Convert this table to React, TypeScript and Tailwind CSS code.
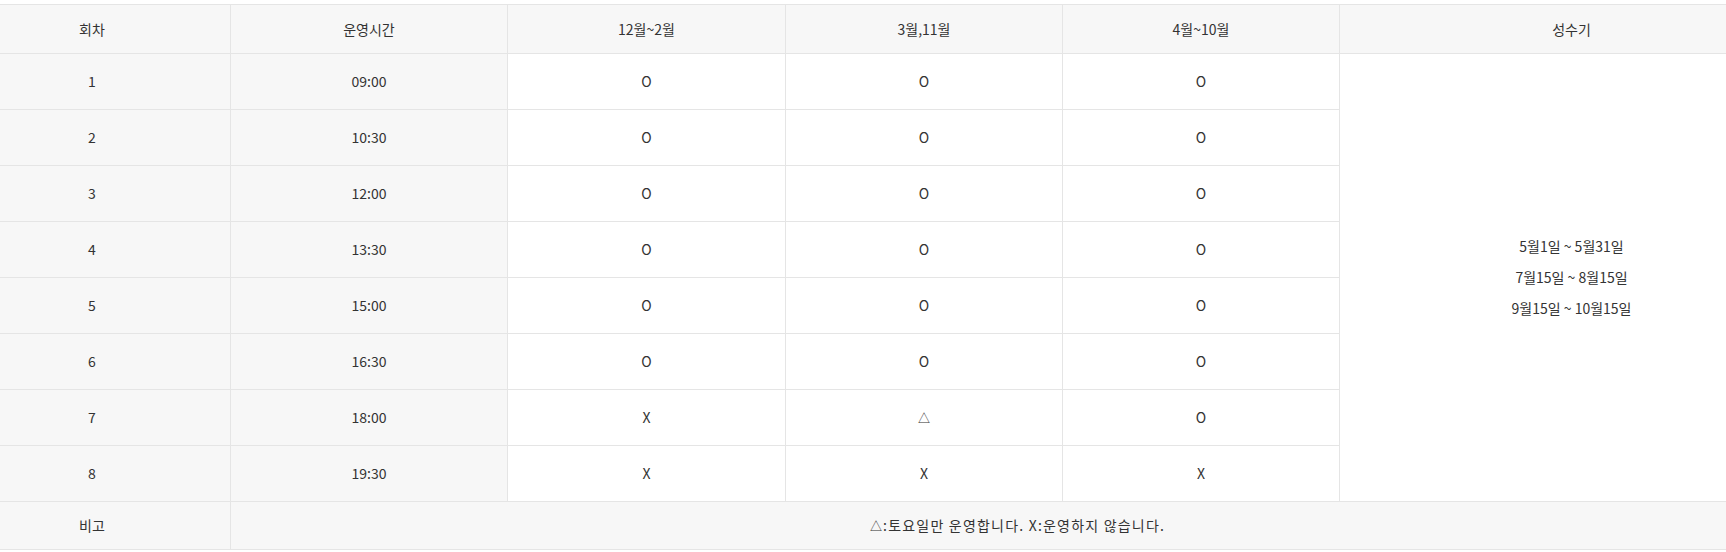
import React from "react";

const rows: { n: string; t: string; a: string; b: string; c: string }[] = [
  { n: "1", t: "09:00", a: "O", b: "O", c: "O" },
  { n: "2", t: "10:30", a: "O", b: "O", c: "O" },
  { n: "3", t: "12:00", a: "O", b: "O", c: "O" },
  { n: "4", t: "13:30", a: "O", b: "O", c: "O" },
  { n: "5", t: "15:00", a: "O", b: "O", c: "O" },
  { n: "6", t: "16:30", a: "O", b: "O", c: "O" },
  { n: "7", t: "18:00", a: "X", b: "△", c: "O" },
  { n: "8", t: "19:30", a: "X", b: "X", c: "X" },
];

function Mark({ v }: { v: string }) {
  if (v === "△") return <span className="text-[12px]">△</span>;
  return <>{v}</>;
}

export default function App() {
  return (
    <div
      className="w-[1726px] bg-white pt-[4px] text-[14px] text-[#333]"
      style={{ fontFamily: '"Noto Sans CJK KR", "Noto Sans", sans-serif' }}
    >
      <table className="w-[1726px] table-fixed border-separate border-spacing-0">
        <colgroup>
          <col className="w-[231px]" />
          <col className="w-[277px]" />
          <col className="w-[278px]" />
          <col className="w-[277px]" />
          <col className="w-[277px]" />
          <col className="w-[386px]" />
        </colgroup>
        <thead>
          <tr>
            <th className="h-[50px] border-y border-r border-[#e5e5e5] bg-[#f7f7f7] pr-[46px] text-center font-normal">회차</th>
            <th className="h-[50px] border-y border-r border-[#e5e5e5] bg-[#f7f7f7] text-center font-normal">운영시간</th>
            <th className="h-[50px] border-y border-r border-[#e5e5e5] bg-[#f7f7f7] text-center font-normal">12월~2월</th>
            <th className="h-[50px] border-y border-r border-[#e5e5e5] bg-[#f7f7f7] text-center font-normal">3월,11월</th>
            <th className="h-[50px] border-y border-r border-[#e5e5e5] bg-[#f7f7f7] text-center font-normal">4월~10월</th>
            <th className="h-[50px] border-y border-[#e5e5e5] bg-[#f7f7f7] pl-[77px] text-center font-normal">성수기</th>
          </tr>
        </thead>
        <tbody>
          {rows.map((r, i) => (
            <tr key={r.n}>
              <td className="h-[56px] border-b border-r border-[#e5e5e5] bg-[#f7f7f7] pr-[46px] text-center">{r.n}</td>
              <td className="h-[56px] border-b border-r border-[#e5e5e5] bg-[#f7f7f7] text-center">{r.t}</td>
              <td className="h-[56px] border-b border-r border-[#e5e5e5] bg-white text-center"><Mark v={r.a} /></td>
              <td className="h-[56px] border-b border-r border-[#e5e5e5] bg-white text-center"><Mark v={r.b} /></td>
              <td className="h-[56px] border-b border-r border-[#e5e5e5] bg-white text-center"><Mark v={r.c} /></td>
              {i === 0 && (
                <td rowSpan={8} className="border-b border-[#e5e5e5] bg-white pl-[77px] text-center leading-[31px]">
                  <div>5월1일 ~ 5월31일</div>
                  <div>7월15일 ~ 8월15일</div>
                  <div>9월15일 ~ 10월15일</div>
                </td>
              )}
            </tr>
          ))}
          <tr>
            <td className="h-[48px] border-b border-r border-[#e5e5e5] bg-[#f7f7f7] pr-[46px] text-center">비고</td>
            <td colSpan={5} className="h-[48px] border-b border-[#e5e5e5] bg-[#f7f7f7] pl-[78px] text-center tracking-[1.2px]">
              <span className="text-[12px]">△</span>:토요일만 운영합니다. X:운영하지 않습니다.
            </td>
          </tr>
        </tbody>
      </table>
    </div>
  );
}
